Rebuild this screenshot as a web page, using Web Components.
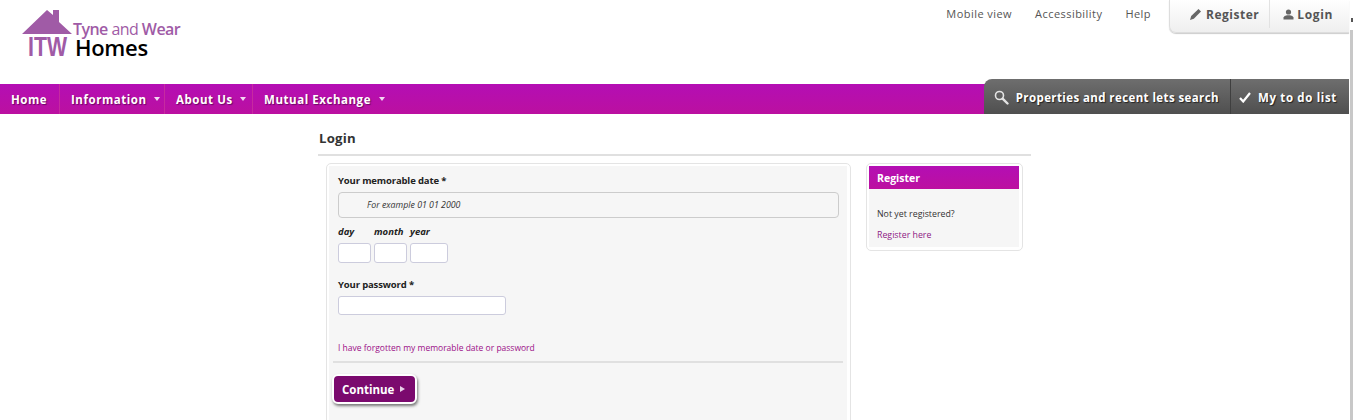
<!DOCTYPE html>
<html lang="en"><head><meta charset="utf-8"><title>Login</title>
<style>
html,body{margin:0;padding:0;height:420px;overflow:hidden;background:#fff}
body{font-family:"Open Sans","Noto Sans",sans-serif;color:#333;position:relative}
</style></head><body>
<twh-header></twh-header>
<twh-nav></twh-nav>
<twh-login></twh-login>
<twh-scroll></twh-scroll>
<script>
function def(name,html){customElements.define(name,class extends HTMLElement{constructor(){super();this.attachShadow({mode:'open'}).innerHTML=html}})}
def('twh-scroll',`<style>
:host{display:block;position:absolute;right:0;top:0;bottom:0;width:3px}
.a{position:absolute;right:0;top:18px;width:2px;height:4px;background:#555}
.b{position:absolute;left:0;right:0;top:30px;bottom:0;background:#c8c8c8}
</style><div class="a"></div><div class="b"></div>`);
def('twh-logo',`<style>
:host{display:block;width:165px;height:50px;margin:10px 0 0 22px;flex:none}
.w{display:flex;align-items:flex-start}
svg{display:block;flex:none;overflow:visible}
.t{margin:12px 0 0 0;font-family:"Open Sans",sans-serif}
.a{font-size:16px;line-height:15px;color:#a05ba6;letter-spacing:-.55px;font-weight:400;white-space:nowrap}
.a b{font-weight:600}
.h{font-size:22px;line-height:20px;color:#000;font-weight:600;letter-spacing:-.3px;margin-left:2px}
</style><div class="w"><svg width="51" height="52" viewBox="0 0 51 52">
<path d="M0 24 L25 0 L31 5 V0 H37 V12 L50 24 Z" fill="#a05ba6"/>
<text x="6" y="46" font-family="Liberation Sans" font-weight="700" font-size="27" fill="#a05ba6" textLength="39" lengthAdjust="spacingAndGlyphs">ITW</text>
</svg><div class="t"><div class="a"><b>Tyne</b> and <b>Wear</b></div><div class="h">Homes</div></div></div>`);
def('twh-header',`<style>
:host{display:flex;justify-content:space-between;height:84px;font-size:11px;color:#555}
.r{display:flex;align-items:flex-start}
a{color:#555;text-decoration:none;letter-spacing:.45px;line-height:14px;margin-top:7px;margin-right:23px;white-space:nowrap}
a:nth-child(3){margin-right:18px}
.t{display:flex;width:180px;height:33px;box-sizing:border-box;margin-right:4px;border:1px solid #ddd;border-top:0;border-right:0;border-radius:0 0 0 7px;background:linear-gradient(#fff,#efefef);font-weight:700;font-size:12px;letter-spacing:.5px;color:#555;box-shadow:0 1px 1px #ccc}
.t span{display:flex;align-items:center;gap:4px;height:28px;padding-left:20px;white-space:nowrap}
.t span+span{border-left:1px solid #e2e2e2;padding-left:13px;margin-left:10px;gap:3px;letter-spacing:.7px}
</style><twh-logo></twh-logo><div class="r"><a>Mobile view</a><a>Accessibility</a><a>Help</a>
<div class="t"><span><svg width="12" height="12" viewBox="0 0 12 12"><path d="M0 12 L1.2 8 L8.5 1 L11 3.4 L3.8 10.8 Z" fill="#666"/></svg>Register</span><span><svg width="11" height="11" viewBox="0 0 11 11"><circle cx="5.5" cy="3" r="2.6" fill="#666"/><path d="M0.5 10.5 V8.5 Q1 6.5 4 6.3 H7 Q10 6.5 10.5 8.5 V10.5 Z" fill="#666"/></svg>Login</span></div></div>`);
def('twh-nav',`<style>
:host{display:flex;height:30px;background:linear-gradient(#b40eb4,#bb10a0);font-weight:700;font-size:11.5px;letter-spacing:.55px;color:#fff;margin-right:4px}
.i{display:flex;align-items:center;height:30px;padding:0 0 0 11px;border-right:1px solid #c62aa0;white-space:nowrap;text-shadow:1px 1px 1px rgba(60,0,60,.6);box-sizing:border-box}
.i.m::after{content:"";margin-left:7.5px;border:3.5px solid transparent;border-top:4px solid #f2d8f2;border-bottom:0}
.s{flex:1}
.g{display:flex;align-self:flex-end;height:35px;background:linear-gradient(#6e6e6e,#4f4f4f);border-radius:8px 0 0 0;font-size:11.5px;letter-spacing:.4px;margin-top:-5px}
.g span{display:flex;align-items:center;gap:7px;height:35px;padding:2px 11px 0 10px;white-space:nowrap;box-sizing:border-box;text-shadow:1px 1px 1px #222}
.g span+span{border-left:1px solid #3f3f3f;padding:2px 12px 0 8px;letter-spacing:.65px}
</style><div class="i" style="width:60px">Home</div><div class="i m" style="width:105px">Information</div><div class="i m" style="width:88px">About Us</div><div class="i m" style="border:0">Mutual Exchange</div><div class="s"></div>
<div class="g"><span><svg width="15" height="15" viewBox="0 0 15 15"><circle cx="5.5" cy="5.5" r="4" fill="none" stroke="#e4e4e4" stroke-width="1.6"/><path d="M8.6 8.6 L13.5 13.5" stroke="#e4e4e4" stroke-width="2.4" stroke-linecap="round"/></svg>Properties and recent lets search</span><span><svg width="12" height="11" viewBox="0 0 12 11"><path d="M1 6 L4.2 9.5 L11 1" fill="none" stroke="#fff" stroke-width="2.2"/></svg>My to do list</span></div>`);
def('twh-panel',`<style>
:host{display:block;box-sizing:border-box;border:1px solid #e4e4e4;border-radius:5px;padding:2px 3px 3px 2px}
.in{background:#f6f6f6;height:100%}
</style><div class="in"><slot></slot></div>`);
def('twh-field',`<style>
:host{display:block;width:var(--w,33px);height:var(--h,20px);box-sizing:border-box;background:#fff;border:1px solid #ccd;border-radius:3px;flex:none}
</style>`);
def('twh-login',`<style>
:host{display:block;width:713px;margin-left:318px;font-size:9px}
h1{margin:0;font-size:13.2px;line-height:18px;padding:15px 0 7px 1px;font-weight:700;color:#333;letter-spacing:.2px;border-bottom:2px solid #e0e0e0}
.cols{display:flex;align-items:flex-start;margin-top:7px;margin-left:8px;gap:15px}
.main{width:525px;height:300px;flex:none}
.f{padding:8px 8px 0 9px}
.lb{font-weight:700;font-size:9.5px;letter-spacing:-.14px;line-height:13px;color:#222}
.hint{height:26px;box-sizing:border-box;margin-top:5px;border:1px solid #ccc;border-radius:4px;display:flex;align-items:center;padding-left:28px;font-style:italic;font-size:8.8px;color:#333}
.dl{display:flex;margin-top:7px;font-style:italic;font-weight:700;font-size:9.5px;line-height:13px;color:#222}
.dl span{width:36px}
.di{display:flex;gap:3px;margin-top:5px}
a.lk{display:block;color:#9c1088;font-size:8.5px;line-height:12px;margin-top:27px;white-space:nowrap}
hr{border:0;border-top:2px solid #e0e0e0;margin:7px 4px 0 4px}
.btn{display:inline-flex;align-items:center;gap:6px;margin:11px 0 0 3px;height:30px;box-sizing:border-box;width:85px;padding-left:8px;background:#7b0a6e;color:#fff;font-weight:700;font-size:11.5px;border:2px solid #fff;border-radius:6px;box-shadow:1px 2px 3px #777;white-space:nowrap}
.btn::after{content:"";border:3px solid transparent;border-left:5px solid #e8d0e8;border-right:0}
.side{width:157px;height:88px;flex:none}
.hd{background:linear-gradient(#b40eb4,#bc10a0);color:#fff;font-weight:700;font-size:10.5px;height:23px;line-height:24px;padding-left:8px}
.sb{padding:19px 8px 0;font-size:8.8px;line-height:12px;color:#333}
.sb a{display:block;color:#8e1a85;margin-top:9px}
</style><h1>Login</h1><div class="cols">
<twh-panel class="main"><div class="f"><div class="lb">Your memorable date *</div><div class="hint">For example 01 01 2000</div>
<div class="dl"><span>day</span><span>month</span><span>year</span></div>
<div class="di"><twh-field></twh-field><twh-field></twh-field><twh-field style="--w:38px"></twh-field></div>
<div class="lb" style="margin-top:15px">Your password *</div><twh-field style="--w:168px;--h:19px;margin-top:5px"></twh-field>
<a class="lk">I have forgotten my memorable date or password</a></div><hr><div class="btn">Continue</div></twh-panel>
<twh-panel class="side"><div class="hd">Register</div><div class="sb">Not yet registered?<a>Register here</a></div></twh-panel>
</div>`);
</script></body></html>
